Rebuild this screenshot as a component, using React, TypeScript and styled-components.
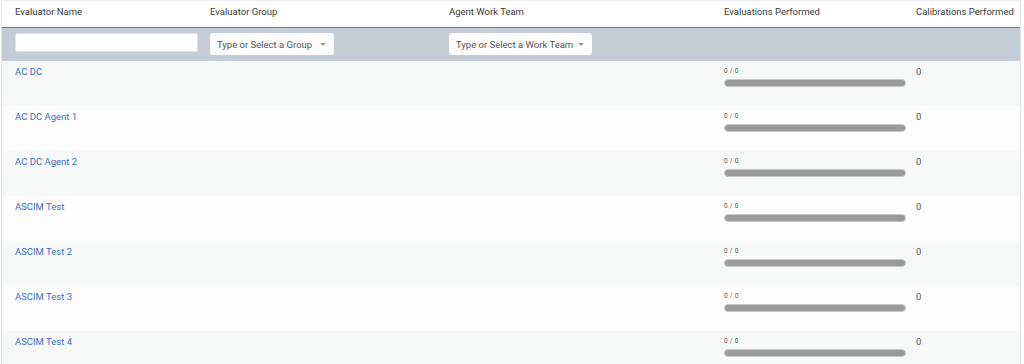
import styled, { createGlobalStyle } from 'styled-components'

const GlobalStyle = createGlobalStyle`
    html, body {
        margin: 0;
        padding: 0;
        background: #ffffff;
        font-family: Roboto, "Liberation Sans", Arial, sans-serif;
    }
`

const COLUMNS = '195px 239px 275px 192px 1fr'

const evaluators = [
    'AC DC',
    'AC DC Agent 1',
    'AC DC Agent 2',
    'ASCIM Test',
    'ASCIM Test 2',
    'ASCIM Test 3',
    'ASCIM Test 4',
]

export default function App() {
    return (
        <>
            <GlobalStyle />
            <Table>
                <HeaderRow>
                    <HeaderCell>Evaluator Name</HeaderCell>
                    <HeaderCell>Evaluator Group</HeaderCell>
                    <HeaderCell>Agent Work Team</HeaderCell>
                    <HeaderCell>Evaluations Performed</HeaderCell>
                    <HeaderCell>Calibrations Performed</HeaderCell>
                </HeaderRow>

                <FilterRow>
                    <FilterCell>
                        <TextInput />
                    </FilterCell>
                    <FilterCell>
                        <Select $width={124}>
                            <span>Type or Select a Group</span>
                            <Caret />
                        </Select>
                    </FilterCell>
                    <FilterCell>
                        <Select $width={143}>
                            <span>Type or Select a Work Team</span>
                            <Caret />
                        </Select>
                    </FilterCell>
                    <FilterCell />
                    <FilterCell />
                </FilterRow>

                {evaluators.map((name, index) => (
                    <DataRow key={name} $striped={index % 2 === 0}>
                        <Cell>
                            <NameLink href="#">{name}</NameLink>
                        </Cell>
                        <Cell />
                        <Cell />
                        <Cell>
                            <Progress>
                                <ProgressLabel>0 / 0</ProgressLabel>
                                <ProgressBar />
                            </Progress>
                        </Cell>
                        <Cell>
                            <Count>0</Count>
                        </Cell>
                    </DataRow>
                ))}
            </Table>
        </>
    )
}

const Table = styled.div`
    width: 1020px;
    margin-left: 1px;
    border-left: 1px solid #e2e4e6;
    border-right: 1px solid #e2e4e6;
    border-top: 1px solid #eceef0;
    box-sizing: border-box;
    height: 364px;
    overflow: hidden;
`

const HeaderRow = styled.div`
    display: grid;
    grid-template-columns: ${COLUMNS};
    height: 27px;
    box-sizing: border-box;
    padding-top: 5px;
    background: #ffffff;
    border-bottom: 1px solid #5b82c9;
`

const HeaderCell = styled.div`
    padding-left: 13px;
    font-size: 9.5px;
    line-height: 12px;
    color: #383838;
    white-space: nowrap;
`

const FilterRow = styled.div`
    display: grid;
    grid-template-columns: ${COLUMNS};
    height: 33px;
    box-sizing: border-box;
    padding-top: 5px;
    background: #c6ccd5;
`

const FilterCell = styled.div`
    padding-left: 13px;
    display: flex;
    align-items: flex-start;
`

const TextInput = styled.input`
    width: 187px;
    height: 19px;
    margin: 0;
    box-sizing: border-box;
    border: 1px solid #dfe2e6;
    border-radius: 2px;
    background: #ffffff;
    outline: none;
`

const Select = styled.div<{ $width: number }>`
    width: ${({ $width }) => $width}px;
    height: 22px;
    box-sizing: border-box;
    padding: 0 6px 0 7px;
    background: #fdfdfd;
    border-radius: 3px;
    display: flex;
    align-items: center;
    justify-content: space-between;
    font-size: 9.5px;
    color: #555555;
    white-space: nowrap;
`

const Caret = styled.span`
    width: 0;
    height: 0;
    margin-right: 2px;
    border-left: 3px solid transparent;
    border-right: 3px solid transparent;
    border-top: 3px solid #9a9a9a;
`

const DataRow = styled.div<{ $striped: boolean }>`
    display: grid;
    grid-template-columns: ${COLUMNS};
    height: 45px;
    background: ${({ $striped }) => ($striped ? '#f7f9f9' : '#fdfdfd')};
`

const Cell = styled.div`
    padding: 5px 0 0 13px;
    font-size: 9.5px;
    line-height: 12px;
`

const NameLink = styled.a`
    display: block;
    font-size: 9.5px;
    line-height: 12px;
    color: #3b6cc7;
    text-decoration: none;
`

const Progress = styled.div`
    display: flex;
    flex-direction: column;
    gap: 4px;
    padding-top: 1px;
`

const ProgressLabel = styled.span`
    font-size: 6.5px;
    line-height: 8px;
    color: #555555;
    letter-spacing: 0.3px;
`

const ProgressBar = styled.div`
    width: 182px;
    height: 8px;
    box-sizing: border-box;
    border-radius: 4px;
    background: #9a9a9a;
    border: 1px solid #c8c8c8;
`

const Count = styled.span`
    display: block;
    color: #555555;
`
